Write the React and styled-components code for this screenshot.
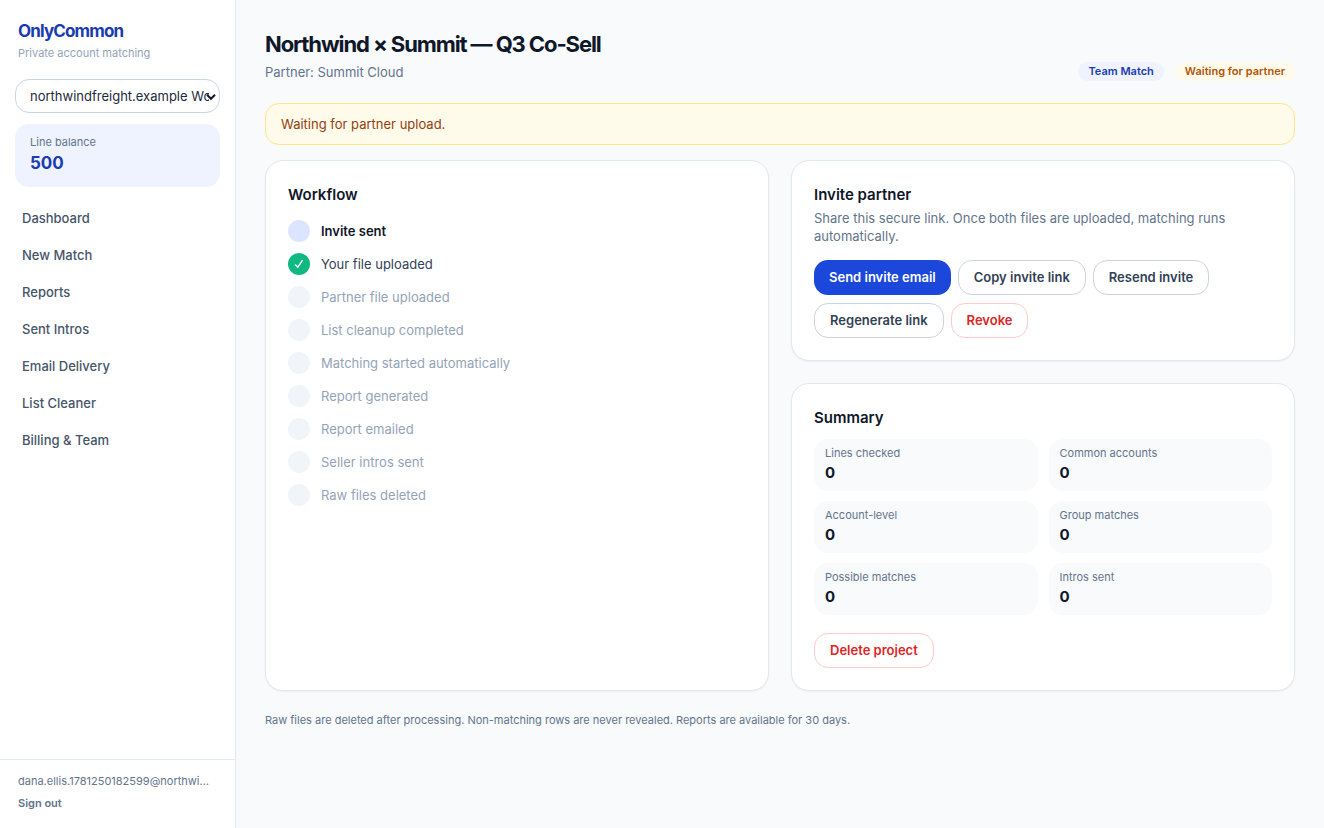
import React from "react";
import styled, { createGlobalStyle, css } from "styled-components";

const GlobalStyle = createGlobalStyle`
  *, *::before, *::after { box-sizing: border-box; }
  body {
    margin: 0;
    background: #f8fafc;
    color: #0f172a;
    font-family: Inter, "Liberation Sans", sans-serif;
    font-size: 13px;
    line-height: 18px;
  }
  h1, h2, p, ul, ol, dl, dd { margin: 0; padding: 0; }
  ul, ol { list-style: none; }
  button, select { font: inherit; }
`;

const Shell = styled.div`
  display: flex;
  min-height: 100vh;
`;

const Sidebar = styled.aside`
  display: flex;
  flex-direction: column;
  flex: 0 0 236px;
  min-width: 0;
  background: #fff;
  border-right: 1px solid #e2e8f0;
`;

const Brand = styled.div`
  padding: 18px;
`;

const BrandName = styled.p`
  font-size: 17px;
  line-height: 26px;
  font-weight: 700;
  letter-spacing: -0.05em;
  color: #1a3cb0;
`;

const Tagline = styled.p`
  margin-top: 2px;
  font-size: 11px;
  line-height: 15px;
  color: #94a3b8;
`;

const Account = styled.div`
  display: flex;
  flex-direction: column;
  gap: 11px;
  padding: 0 15px;
`;

const SelectField = styled.div`
  position: relative;

  svg {
    position: absolute;
    top: 14px;
    right: 4px;
    pointer-events: none;
  }
`;

const WorkspaceSelect = styled.select`
  display: block;
  width: 100%;
  height: 34px;
  padding: 0 10px 0 14px;
  border: 1px solid #cbd5e1;
  border-radius: 14px;
  appearance: none;
  background: #fff;
  color: #1e293b;
`;

const Balance = styled.div`
  height: 63px;
  padding: 11px 15px;
  border-radius: 14px;
  background: #eef3ff;
`;

const BalanceLabel = styled.p`
  font-size: 11px;
  line-height: 15px;
  color: #64748b;
`;

const BalanceValue = styled.p`
  font-size: 17px;
  line-height: 26px;
  font-weight: 700;
  color: #1a3cb0;
`;

const Nav = styled.nav`
  display: flex;
  flex-direction: column;
  flex: 1;
  gap: 4px;
  padding: 15px 11px;
`;

const NavLink = styled.a`
  padding: 7px 11px 8px;
  border-radius: 11px;
  font-weight: 500;
  color: #475569;
  text-decoration: none;
`;

const UserPanel = styled.div`
  padding: 14px 22px 17px 18px;
  border-top: 1px solid #e2e8f0;
  font-size: 11px;
  line-height: 15px;
  color: #64748b;
`;

const Email = styled.p`
  overflow: hidden;
  text-overflow: ellipsis;
  white-space: nowrap;
`;

const SignOut = styled.button`
  display: block;
  margin-top: 7px;
  padding: 0;
  border: 0;
  background: none;
  font-weight: 600;
  color: #64748b;
`;

const Main = styled.main`
  flex: 1;
  min-width: 0;
  padding: 30px 29px;
`;

const Header = styled.header`
  display: flex;
  align-items: flex-end;
  justify-content: space-between;
  gap: 15px;
  margin-bottom: 22px;
`;

const Title = styled.h1`
  font-size: 22px;
  line-height: 29px;
  font-weight: 700;
  letter-spacing: -0.05em;
`;

const Partner = styled.p`
  margin-top: 4px;
  color: #64748b;
`;

const Badges = styled.div`
  display: flex;
  gap: 11px;
`;

const Badge = styled.span`
  padding: 2px 10px;
  border-radius: 10px;
  font-size: 11px;
  line-height: 15px;
  font-weight: 600;
  background: ${(p) => (p.$tone === "warn" ? "#fffbeb" : "#eef3ff")};
  color: ${(p) => (p.$tone === "warn" ? "#b45309" : "#1a3cb0")};
`;

const Notice = styled.p`
  padding: 11px 15px;
  border: 1px solid #fde68a;
  border-radius: 14px;
  background: #fffbeb;
  color: #92400e;
`;

const Columns = styled.div`
  display: grid;
  grid-template-columns: 1fr 1fr;
  gap: 22px;
  margin-top: 15px;
`;

const Stack = styled.div`
  display: flex;
  flex-direction: column;
  gap: 22px;
`;

const Card = styled.section`
  padding: 22px;
  border: 1px solid #e2e8f0;
  border-radius: 18px;
  background: #fff;
  box-shadow: 0 1px 2px rgba(15, 23, 42, 0.05);
`;

const CardTitle = styled.h2`
  font-size: 15px;
  line-height: 24px;
  font-weight: 600;
`;

const Steps = styled.ol`
  display: flex;
  flex-direction: column;
  gap: 11px;
  margin-top: 13px;
`;

const stepTones = {
  current: css`color: #0f172a; font-weight: 600;`,
  done: css`color: #334155;`,
  pending: css`color: #94a3b8;`,
};

const Step = styled.li`
  display: flex;
  align-items: center;
  gap: 11px;
  ${(p) => stepTones[p.$state]}
`;

const markColors = { current: "#dbe6fe", done: "#10b981", pending: "#f1f5f9" };

const StepMark = styled.span`
  display: flex;
  align-items: center;
  justify-content: center;
  width: 22px;
  height: 22px;
  border-radius: 50%;
  background: ${(p) => markColors[p.$state]};
`;

const InviteText = styled.p`
  margin-top: 2px;
  color: #64748b;
`;

const Actions = styled.div`
  display: flex;
  flex-wrap: wrap;
  gap: 8px 7px;
  margin-top: ${(p) => (p.$spaced ? "18px" : "15px")};
`;

const buttonTones = {
  primary: css`border: 0; background: #1b48db; color: #fff;`,
  plain: css`background: #fff; border-color: #cbd5e1; color: #334155;`,
  danger: css`background: #fff; border-color: #fecaca; color: #dc2626;`,
};

const Button = styled.button`
  padding: 7px 15px 8px;
  border: 1px solid;
  border-radius: 14px;
  font-weight: 600;
  ${(p) => buttonTones[p.$tone || "plain"]}
`;

const Stats = styled.dl`
  display: grid;
  grid-template-columns: 1fr 1fr;
  gap: 10px 11px;
  margin-top: 9px;
`;

const Stat = styled.div`
  padding: 7px 11px;
  border-radius: 14px;
  background: #f8fafc;
`;

const StatLabel = styled.dt`
  font-size: 11px;
  line-height: 15px;
  color: #64748b;
`;

const StatValue = styled.dd`
  font-size: 15px;
  line-height: 23px;
  font-weight: 700;
`;

const Footnote = styled.p`
  margin-top: 22px;
  font-size: 11px;
  line-height: 15px;
  color: #64748b;
`;

const navItems = ["Dashboard", "New Match", "Reports", "Sent Intros", "Email Delivery", "List Cleaner", "Billing & Team"];

const steps = [
  ["Invite sent", "current"],
  ["Your file uploaded", "done"],
  ["Partner file uploaded", "pending"],
  ["List cleanup completed", "pending"],
  ["Matching started automatically", "pending"],
  ["Report generated", "pending"],
  ["Report emailed", "pending"],
  ["Seller intros sent", "pending"],
  ["Raw files deleted", "pending"],
];

const stats = ["Lines checked", "Common accounts", "Account-level", "Group matches", "Possible matches", "Intros sent"];

export default function App() {
  return (
    <>
      <GlobalStyle />
      <Shell>
        <Sidebar>
          <Brand>
            <BrandName>OnlyCommon</BrandName>
            <Tagline>Private account matching</Tagline>
          </Brand>
          <Account>
            <SelectField>
              <WorkspaceSelect aria-label="Workspace">
                <option>northwindfreight.example Workspace</option>
              </WorkspaceSelect>
              <svg width="10" height="8" viewBox="0 0 10 8" fill="none" stroke="#0f172a" strokeWidth="2" aria-hidden="true">
                <path d="M1 1.8 5 5.8 9 1.8" />
              </svg>
            </SelectField>
            <Balance>
              <BalanceLabel>Line balance</BalanceLabel>
              <BalanceValue>500</BalanceValue>
            </Balance>
          </Account>
          <Nav>
            {navItems.map((item) => (
              <NavLink href="#" key={item}>{item}</NavLink>
            ))}
          </Nav>
          <UserPanel>
            <Email>dana.ellis.1781250182599@northwindfreight.example</Email>
            <SignOut type="button">Sign out</SignOut>
          </UserPanel>
        </Sidebar>
        <Main>
          <Header>
            <div>
              <Title>Northwind × Summit — Q3 Co-Sell</Title>
              <Partner>Partner: Summit Cloud</Partner>
            </div>
            <Badges>
              <Badge>Team Match</Badge>
              <Badge $tone="warn">Waiting for partner</Badge>
            </Badges>
          </Header>
          <Notice role="status">Waiting for partner upload.</Notice>
          <Columns>
            <Card>
              <CardTitle>Workflow</CardTitle>
              <Steps>
                {steps.map(([label, state]) => (
                  <Step key={label} $state={state}>
                    <StepMark $state={state}>
                      {state === "done" && (
                        <svg width="10" height="10" viewBox="0 0 10 10" fill="none" stroke="#fff" strokeWidth="1.4" aria-hidden="true">
                          <path d="M1.2 5.4 3.8 8.2 8.6 1.2" />
                        </svg>
                      )}
                    </StepMark>
                    {label}
                  </Step>
                ))}
              </Steps>
            </Card>
            <Stack>
              <Card>
                <CardTitle>Invite partner</CardTitle>
                <InviteText>
                  Share this secure link. Once both files are uploaded, matching runs automatically.
                </InviteText>
                <Actions>
                  <Button type="button" $tone="primary">Send invite email</Button>
                  <Button type="button">Copy invite link</Button>
                  <Button type="button">Resend invite</Button>
                  <Button type="button">Regenerate link</Button>
                  <Button type="button" $tone="danger">Revoke</Button>
                </Actions>
              </Card>
              <Card>
                <CardTitle>Summary</CardTitle>
                <Stats>
                  {stats.map((label) => (
                    <Stat key={label}>
                      <StatLabel>{label}</StatLabel>
                      <StatValue>0</StatValue>
                    </Stat>
                  ))}
                </Stats>
                <Actions $spaced>
                  <Button type="button" $tone="danger">Delete project</Button>
                </Actions>
              </Card>
            </Stack>
          </Columns>
          <Footnote>
            Raw files are deleted after processing. Non-matching rows are never revealed. Reports are available for 30 days.
          </Footnote>
        </Main>
      </Shell>
    </>
  );
}
